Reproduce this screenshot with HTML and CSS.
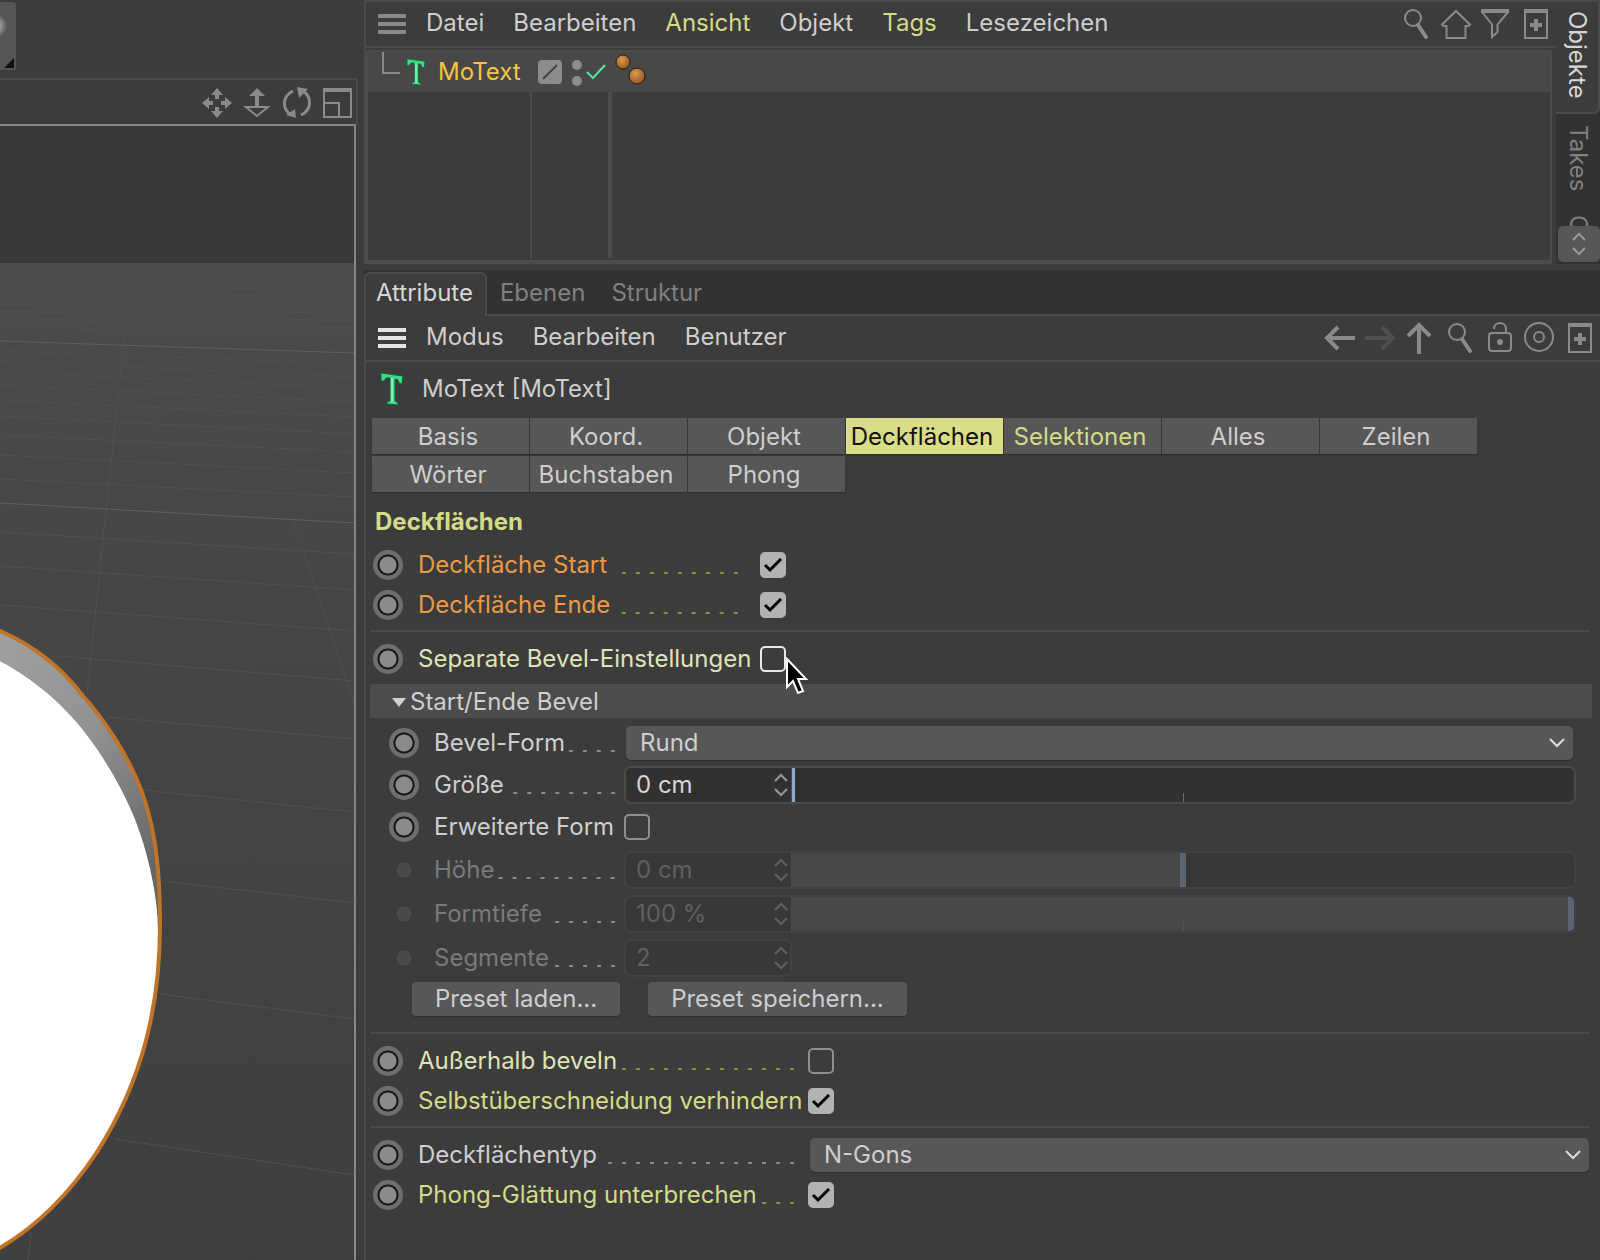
FILE: index.html
```html
<!DOCTYPE html>
<html lang="de">
<head>
<meta charset="utf-8">
<meta name="viewport" content="width=device-width, initial-scale=1">
<title>MoText – Attribute</title>
<link rel="stylesheet" href="styles.css">
</head>
<body>
<svg class="sprite" aria-hidden="true">
  <defs>
    <symbol id="i-search" viewBox="0 0 32 32"><circle cx="13" cy="10" r="8" fill="none" stroke="currentColor" stroke-width="2"/><path d="M18 17L26 29" stroke="currentColor" stroke-width="4" stroke-linecap="round"/></symbol>
    <symbol id="i-home" viewBox="0 0 32 32"><path d="M16 3L30 16.500L28.500 18H25.500V30H6.500V18H3.500L2 16.500Z" fill="none" stroke="currentColor" stroke-width="2"/></symbol>
    <symbol id="i-filter" viewBox="0 0 32 32"><path d="M1 1H29V5H1Z" fill="currentColor"/><path d="M2 4L12 16.500V29L17.500 24V16.500L28 4" fill="none" stroke="currentColor" stroke-width="2"/></symbol>
    <symbol id="i-plus" viewBox="0 0 32 32"><path d="M4 1H28V5H4Z" fill="currentColor"/><path d="M5 3V30H27V3" fill="none" stroke="currentColor" stroke-width="2"/><path d="M16 11V23M10 17H22" stroke="currentColor" stroke-width="4"/></symbol>
    <symbol id="i-left" viewBox="0 0 32 32"><path d="M31 16H4M14 5L3 16L14 27" fill="none" stroke="currentColor" stroke-width="4"/></symbol>
    <symbol id="i-right" viewBox="0 0 32 32"><path d="M1 16H28M18 5L29 16L18 27" fill="none" stroke="currentColor" stroke-width="4"/></symbol>
    <symbol id="i-up" viewBox="0 0 32 32"><path d="M15 32V4M4 14L15 3L26 14" fill="none" stroke="currentColor" stroke-width="4"/></symbol>
    <symbol id="i-lock" viewBox="0 0 32 32"><rect x="5" y="11" width="22" height="18" rx="3" fill="none" stroke="currentColor" stroke-width="2"/><path d="M10 7C10 -1 22 -1 22 7V11" fill="none" stroke="currentColor" stroke-width="2"/><circle cx="16" cy="20" r="3" fill="currentColor"/></symbol>
    <symbol id="i-target" viewBox="0 0 32 32"><circle cx="15" cy="15" r="14" fill="none" stroke="currentColor" stroke-width="2"/><circle cx="15" cy="15" r="5" fill="none" stroke="currentColor" stroke-width="2"/></symbol>
    <symbol id="i-menu" viewBox="0 0 28 20"><path d="M0 0H28V4H0ZM0 8H28V12H0ZM0 16H28V20H0Z" fill="currentColor"/></symbol>
    <symbol id="i-text" viewBox="0 0 24 34"><path d="M1 1L23 4L22 12L19 11L18 8L15 7V29L18 31V33L7 32V30L10 29V6L6 6L4 9L1 9Z" fill="#3fd98a" stroke="#185f3a" stroke-width="1"/><path d="M12 6V30" stroke="#7df5b4" stroke-width="2"/></symbol>
    <symbol id="i-spin" viewBox="0 0 14 24"><path d="M1 8L7 2L13 8M1 16L7 22L13 16" fill="none" stroke="currentColor" stroke-width="2"/></symbol>
  </defs>
</svg>

<div class="app">
  <section class="stage" aria-label="Ansicht">
    <div class="palette">
      <svg class="swatch" width="16" height="68" viewBox="0 0 16 68" aria-hidden="true">
        <defs><radialGradient id="glow" cx="-6" cy="24" r="13" gradientUnits="userSpaceOnUse"><stop offset="0" stop-color="#d8d8d8"/><stop offset="1" stop-color="#565656"/></radialGradient></defs>
        <path d="M0 0H13Q16 0 16 3V65Q16 68 13 68H0Z" fill="#565656"/>
        <circle cx="-6" cy="24" r="13" fill="url(#glow)"/>
        <path d="M14 56V66H4Z" fill="#111"/>
      </svg>
    </div>
    <div class="stage-bar">
      <button class="icon" aria-label="Verschieben"><svg viewBox="0 0 32 32"><path d="M16 1L22 8H18V12H14V8H10ZM16 31L10 24H14V20H18V24H22ZM1 16L8 10V14H12V18H8V22ZM31 16L24 22V18H20V14H24V10Z" fill="currentColor"/></svg></button>
      <button class="icon" aria-label="Zoomen"><svg viewBox="0 0 32 32"><path d="M16 1L24 9H18V19H14V9H8Z" fill="currentColor"/><path d="M5 20H27L16 29Z" fill="none" stroke="currentColor" stroke-width="2"/></svg></button>
      <button class="icon" aria-label="Drehen"><svg viewBox="0 0 32 32"><path d="M12 4C1 9 1 22 10 28M20 28C31 23 31 10 22 4" fill="none" stroke="currentColor" stroke-width="3"/><path d="M16 0L27 2L18 11ZM5 28L14 22L15 31Z" fill="currentColor"/></svg></button>
      <button class="icon" aria-label="Ansicht maximieren"><svg viewBox="0 0 32 32"><path d="M3 3H30V30H3ZM3 16H18V30" fill="none" stroke="currentColor" stroke-width="2"/><path d="M2 1H31V5H2Z" fill="currentColor"/></svg></button>
    </div>
    <svg class="scene" viewBox="0 126 354 1134" preserveAspectRatio="xMinYMin slice" aria-hidden="true">
      <defs>
        <linearGradient id="floor" x1="0" y1="0" x2="0" y2="1"><stop offset="0" stop-color="#4c4c4c"/><stop offset=".3" stop-color="#464646"/><stop offset="1" stop-color="#3f3f3f"/></linearGradient>
        <linearGradient id="side" x1="0" y1="0" x2=".6" y2="1"><stop offset="0" stop-color="#a0a0a0"/><stop offset=".5" stop-color="#929292"/><stop offset="1" stop-color="#666"/></linearGradient>
      </defs>
      <rect y="126" width="354" height="137" fill="#393939"/>
      <rect y="263" width="354" height="997" fill="url(#floor)"/>
      <g fill="none" stroke="#505050">
        <path d="M0 276L354 283M0 283L354 291M0 290L354 298M0 297L354 306M0 304L354 314M0 311L354 321M0 318L354 328M0 326L354 336"/>
        <path d="M0 351L354 364M0 361L354 377M0 372L354 388M0 385L354 402M0 400L354 417M0 416L354 434M0 435L354 452M0 455L354 473M0 479L354 497"/>
        <path d="M0 532L354 554M0 566L354 590M0 605L354 631M58 656L354 681M106 717L354 739M143 790L354 812M161 881L354 903M160 994L354 1019M115 1139L354 1175"/>
        <path d="M127 311L87 694M293 523L354 703M31 1232L28 1260"/>
        <path d="M240 359L293 523" stroke="#4b4b4b"/>
        <path d="M0 341L354 353M0 503L354 523" stroke="#606060"/>
      </g>
      <path d="M0 630C33 645 62 668 83 696C103 718 126 752 140 787C152 818 161 855 161 925L158 930C158 900 150 862 140 833C126 790 95 742 72 717C52 695 28 676 0 661Z" fill="url(#side)"/>
      <path d="M0 661C28 676 52 695 72 717C95 742 126 790 140 833C150 862 158 900 158 930L160 950C158 1010 143 1080 97 1152C72 1190 38 1226 0 1248Z" fill="#fff"/>
      <path d="M-2 630C33 645 62 668 83 696C103 718 126 752 140 787C152 818 160 855 160 925C160 1005 143 1080 97 1152C72 1190 38 1226 -2 1249" fill="none" stroke="#c07428" stroke-width="4"/>
    </svg>
  </section>

  <main class="panels">
    <section class="objects">
      <div class="objects-main">
        <nav class="menu">
          <button class="burger" aria-label="Menü"><svg><use href="#i-menu"/></svg></button>
          <button>Datei</button><button>Bearbeiten</button><button class="lime">Ansicht</button><button>Objekt</button><button class="lime">Tags</button><button>Lesezeichen</button>
          <div class="tools">
            <button class="icon" aria-label="Suchen"><svg><use href="#i-search"/></svg></button>
            <button class="icon" aria-label="Start"><svg><use href="#i-home"/></svg></button>
            <button class="icon" aria-label="Filter"><svg><use href="#i-filter"/></svg></button>
            <button class="icon" aria-label="Neu"><svg><use href="#i-plus"/></svg></button>
          </div>
        </nav>
        <div class="tree">
          <div class="tree-row">
            <div class="tree-name">
              <svg class="branch" width="18" height="24" viewBox="0 0 18 24"><path d="M1 0V21H18" fill="none" stroke="#8a8a8a" stroke-width="2"/></svg>
              <svg class="type-small"><use href="#i-text"/></svg>
              <span>MoText</span>
            </div>
            <div class="tree-flags">
              <svg width="70" height="30" viewBox="0 0 70 30"><rect x="0" y="3" width="24" height="24" rx="4" fill="#8c8c8c"/><path d="M5 22L19 8" stroke="#444" stroke-width="2"/><circle cx="39" cy="8" r="5" fill="#8c8c8c"/><circle cx="39" cy="24" r="5" fill="#8c8c8c"/><path d="M49 15L55 21L67 8" fill="none" stroke="#55e59a" stroke-width="2"/></svg>
            </div>
            <div class="tree-tags">
              <svg width="32" height="34" viewBox="0 0 32 34"><defs><radialGradient id="ball" cx=".4" cy=".35" r=".7"><stop offset="0" stop-color="#e09a4c"/><stop offset="1" stop-color="#8f5420"/></radialGradient></defs><circle cx="9" cy="9" r="7" fill="url(#ball)" stroke="#2a1c10"/><circle cx="23" cy="23" r="8" fill="url(#ball)" stroke="#2a1c10"/></svg>
            </div>
          </div>
          <div class="tree-body"><div></div><div></div><div></div></div>
        </div>
      </div>
      <div class="side-tabs">
        <button class="active">Objekte</button>
        <button>Takes</button>
        <button class="cut">C</button>
        <button class="scroller" aria-label="Weitere Tabs"><svg width="14" height="24"><use href="#i-spin"/></svg></button>
      </div>
    </section>

    <section class="attributes">
      <div class="tabs">
        <button class="active">Attribute</button><button>Ebenen</button><button>Struktur</button>
      </div>
      <nav class="menu">
        <button class="burger bright" aria-label="Menü"><svg><use href="#i-menu"/></svg></button>
        <button>Modus</button><button>Bearbeiten</button><button>Benutzer</button>
        <div class="tools">
          <button class="icon" aria-label="Zurück"><svg><use href="#i-left"/></svg></button>
          <button class="icon" aria-label="Vor" disabled><svg><use href="#i-right"/></svg></button>
          <button class="icon" aria-label="Hoch"><svg><use href="#i-up"/></svg></button>
          <button class="icon" aria-label="Suchen"><svg><use href="#i-search"/></svg></button>
          <button class="icon" aria-label="Sperren"><svg><use href="#i-lock"/></svg></button>
          <button class="icon" aria-label="Fokus"><svg><use href="#i-target"/></svg></button>
          <button class="icon" aria-label="Neu"><svg><use href="#i-plus"/></svg></button>
        </div>
      </nav>
      <header class="object-title"><svg class="type-large"><use href="#i-text"/></svg><span>MoText [MoText]</span></header>
      <div class="pages">
        <button>Basis</button><button>Koord.</button><button>Objekt</button><button class="active">Deckflächen</button><button class="lime">Selektionen</button><button>Alles</button><button>Zeilen</button><button>Wörter</button><button>Buchstaben</button><button>Phong</button>
      </div>

      <form class="params">
        <h2>Deckflächen</h2>
        <div class="group caps">
          <div class="row orange"><i class="key"></i><label for="start">Deckfläche Start</label><span class="dots"></span><input type="checkbox" id="start" checked></div>
          <div class="row orange"><i class="key"></i><label for="ende">Deckfläche Ende</label><span class="dots"></span><input type="checkbox" id="ende" checked></div>
        </div>
        <div class="group caps">
          <div class="row pale"><i class="key"></i><label for="separat">Separate Bevel-Einstellungen</label><span class="dots none"></span>
            <span class="hover"><input type="checkbox" id="separat"><svg class="cursor" width="24" height="38" viewBox="0 0 24 38" aria-hidden="true"><path d="M2 2V30L8 24L13 36L18 34L13 22H21Z" fill="#000" stroke="#fff" stroke-width="2"/></svg></span></div>
        </div>
        <button type="button" class="fold"><svg width="14" height="9" viewBox="0 0 14 9"><path d="M0 0H14L7 9Z" fill="#d0d0d0"/></svg>Start/Ende Bevel</button>
        <div class="bevel">
          <div class="row"><i class="key"></i><label for="form">Bevel-Form</label><span class="dots"></span><select id="form"><option>Rund</option></select></div>
          <div class="row"><i class="key"></i><label for="groesse">Größe</label><span class="dots"></span>
            <div class="field"><input type="text" id="groesse" value="0 cm"><svg width="14" height="24"><use href="#i-spin"/></svg><input type="range" class="at-start" value="0" aria-label="Größe"></div></div>
          <div class="row"><i class="key"></i><label for="erweitert">Erweiterte Form</label><span class="dots none"></span><input type="checkbox" id="erweitert"></div>
          <div class="row tall off"><i class="key"></i><label for="hoehe">Höhe</label><span class="dots"></span>
            <div class="field"><input type="text" id="hoehe" value="0 cm" disabled><svg width="14" height="24"><use href="#i-spin"/></svg><input type="range" class="at-middle" value="50" aria-label="Höhe" disabled></div></div>
          <div class="row tall off"><i class="key"></i><label for="tiefe">Formtiefe</label><span class="dots"></span>
            <div class="field"><input type="text" id="tiefe" value="100 %" disabled><svg width="14" height="24"><use href="#i-spin"/></svg><input type="range" class="at-end" value="100" aria-label="Formtiefe" disabled></div></div>
          <div class="row tall off"><i class="key"></i><label for="segmente">Segmente</label><span class="dots"></span>
            <div class="field short"><input type="text" id="segmente" value="2" disabled><svg width="14" height="24"><use href="#i-spin"/></svg></div></div>
          <div class="presets"><button type="button">Preset laden...</button><button type="button">Preset speichern...</button></div>
        </div>
        <div class="group wide">
          <div class="row pale"><i class="key"></i><label for="aussen">Außerhalb beveln</label><span class="dots"></span><input type="checkbox" id="aussen"></div>
          <div class="row lime"><i class="key"></i><label for="selbst">Selbstüberschneidung verhindern</label><span class="dots none"></span><input type="checkbox" id="selbst" checked></div>
        </div>
        <div class="group wide">
          <div class="row"><i class="key"></i><label for="typ">Deckflächentyp</label><span class="dots"></span><select id="typ"><option>N-Gons</option></select></div>
          <div class="row lime"><i class="key"></i><label for="phong">Phong-Glättung unterbrechen</label><span class="dots"></span><input type="checkbox" id="phong" checked></div>
        </div>
      </form>
    </section>
  </main>
</div>
</body>
</html>
```
FILE: styles.css
```css
:root {
  --bg: #3c3c3c;
  --dark: #323232;
  --line: #4b4b4b;
  --button: #575757;
  --text: #cecece;
  --muted: #808080;
  --icon: #8a8a8a;
  --lime: #d3db87;
  --pale: #dfe4b8;
  --orange: #eb9a45;
}

* { box-sizing: border-box; }

body {
  margin: 0;
  background: var(--bg);
  color: var(--text);
  font: 24px/28px Inter, "Liberation Sans", sans-serif;
}

button, input, select {
  margin: 0;
  padding: 0;
  border: 0;
  background: none;
  color: inherit;
  font: inherit;
}

svg { display: block; flex: none; }
.sprite { position: absolute; width: 0; height: 0; }

.app { display: grid; grid-template-columns: 358px minmax(0, 1fr); column-gap: 6px; min-height: 100vh; }

/* 3D view */
.stage { display: flex; flex-direction: column; min-height: 0; }
.palette { height: 78px; padding-top: 2px; }
.stage-bar { display: flex; justify-content: flex-end; align-items: center; gap: 8px; height: 46px; padding: 1px 3px 0 0; border: solid var(--line); border-width: 2px 2px 0 0; }
.scene { flex: 1 0 0; width: 356px; min-height: 0; border: solid #858585; border-width: 2px 2px 0 0; }
.icon { width: 32px; height: 32px; color: var(--icon); }
.icon svg { width: 32px; height: 32px; }
.icon:disabled { color: #505050; }

.panels { display: flex; flex-direction: column; }

/* Object manager */
.objects { display: flex; height: 264px; margin-bottom: 6px; }
.objects-main { display: flex; flex: 1; flex-direction: column; border: solid var(--line); border-width: 2px 0 0 2px; }
.menu { display: flex; align-items: center; gap: 29px; height: 46px; padding: 0 4px 0 12px; border-bottom: 2px solid var(--line); }
.menu > button { padding-bottom: 2px; }
.menu > .burger { width: 28px; height: 20px; margin-right: -9px; padding: 0; color: var(--icon); }
.burger svg { width: 28px; height: 20px; }
.menu > .bright { color: #e6e6e6; }
.tools { display: flex; gap: 8px; margin-left: auto; }
.menu > .lime, .lime { color: var(--lime); }

.tree { display: flex; flex: 1; flex-direction: column; margin: 2px 4px 0 0; border: solid var(--line); border-width: 2px 2px 4px 2px; }
.tree-row { display: grid; grid-template-columns: 162px 80px 1fr; height: 40px; background: #484848; }
.tree-name { display: flex; align-items: center; padding-left: 14px; color: #f5c542; }
.branch { align-self: flex-start; }
.type-small { width: 20px; height: 28px; margin: 0 12px 0 6px; }
.tree-flags { display: flex; align-items: center; padding-left: 8px; }
.tree-tags { padding: 1px 0 0 4px; }
.tree-body { display: grid; flex: 1; grid-template-columns: 164px 80px 1fr; padding-bottom: 2px; }
.tree-body div:nth-child(1) { border-right: 2px solid var(--line); }
.tree-body div:nth-child(2) { border-right: 4px solid var(--line); }

.side-tabs { display: flex; flex-direction: column; width: 44px; background: var(--dark); }
.side-tabs button { width: 44px; color: var(--muted); text-align: left; writing-mode: vertical-rl; line-height: 44px; padding-top: 11px; height: 90px; }
.side-tabs .active { height: 114px; border: solid var(--line); border-width: 2px 2px 2px 0; background: var(--bg); color: #d6d6d6; line-height: 42px; padding-top: 9px; border-radius: 0 0 6px 0; }
.side-tabs .cut { height: 22px; }
.side-tabs .scroller { display: flex; align-items: center; justify-content: center; width: 42px; height: 36px; margin-left: 2px; padding: 0; border-radius: 5px; background: var(--button); color: #999; }

/* Attribute manager */
.attributes { flex: 1; border-left: 2px solid var(--line); }
.tabs { display: flex; height: 46px; background: var(--dark); margin-left: -2px; padding-top: 2px; box-shadow: inset 0 -2px var(--line); }
.tabs button { padding: 0 13px 3px; color: var(--muted); }
.tabs .active { padding: 0 12px 4px 10px; border: solid var(--line); border-width: 2px 2px 0 2px; border-radius: 6px 6px 0 0; background: var(--bg); color: #d6d6d6; }
.object-title { display: flex; align-items: center; gap: 18px; height: 56px; padding: 0 0 2px 14px; }
.type-large { width: 24px; height: 34px; }
.pages { display: grid; grid-template-columns: repeat(auto-fill, 157px); gap: 2px 1px; padding-left: 6px; }
.pages button { height: 36px; padding: 1px 5px 0 0; background: var(--button); box-shadow: 0 1px 1px #2e2e2e; white-space: nowrap; }
.pages .active { background: #d9dd85; color: #111; }

.params { padding: 16px 8px 20px 4px; }
h2 { margin: 0 0 9px 5px; color: var(--lime); font-size: 24px; font-weight: 700; line-height: 28px; }
.group { padding-bottom: 5px; }
.group + .group, .bevel + .group { border-top: 2px solid var(--line); padding-top: 7px; margin-right: 2px; }
.row { display: grid; grid-template-columns: 32px auto minmax(0, 1fr) auto; align-items: center; height: 40px; padding-left: 3px; }
.row label { padding-left: 13px; white-space: nowrap; }
.caps .row { grid-template-columns: 32px auto minmax(0, 1fr) 26px; width: 416px; }
.row.orange { --dot: #8c8f40; }
.row.orange label { color: var(--orange); }
.row.pale, .row.lime { --dot: #8c8f40; }
.pale label { color: var(--pale); }

.key { width: 30px; height: 30px; border-radius: 50%; background: radial-gradient(circle, #8a8a8a 8px, #151515 9px, #151515 10px, #6e6e6e 11px); }
.off .key { width: 18px; height: 18px; margin-left: 6px; border: 1px solid #363636; background: #494949; }
.off { color: #7a7a7a; }

.dots { height: 2px; margin: 16px 22px 0 6px; background: linear-gradient(to left, var(--dot, #8a8a8a) 4px, transparent 4px) right / 14px 2px repeat-x; }
.dots.none { background: none; margin: 0; }

input[type="checkbox"] { appearance: none; width: 26px; height: 26px; border: 2px solid #8e8e8e; border-radius: 5px; }
input[type="checkbox"]:checked { border: 0; background: #b2b2b2 url("data:image/svg+xml,%3Csvg xmlns='http://www.w3.org/2000/svg' viewBox='0 0 26 26'%3E%3Cpath d='M5 13L10 18L21 7' fill='none' stroke='%23000' stroke-width='3'/%3E%3C/svg%3E"); }
.hover { position: relative; height: 26px; }
.hover input { display: block; }
.hover input[type="checkbox"] { border-color: #e8e8e8; }
.cursor { position: absolute; left: 25px; top: 11px; }

.fold { display: flex; align-items: center; gap: 4px; width: 100%; height: 34px; padding: 2px 0 0 22px; background: #4c4c4c; }

select { appearance: none; width: 100%; height: 34px; padding-left: 14px; border-radius: 5px; background: var(--button) url("data:image/svg+xml,%3Csvg xmlns='http://www.w3.org/2000/svg' width='18' height='12'%3E%3Cpath d='M2 2L9 9L16 2' fill='none' stroke='%23ddd' stroke-width='2'/%3E%3C/svg%3E") right 7px center no-repeat; box-shadow: 0 1px 1px #2e2e2e; }

.bevel { padding: 4px 16px 16px; }
.bevel .row { height: 42px; padding-left: 3px; grid-template-columns: 32px auto minmax(0, 1fr) calc(100% - 235px); }
.bevel .tall { height: 44px; }
.bevel .dots { margin-left: 4px; margin-right: 9px; }
.bevel .dots.none { margin: 0; }
.bevel select { margin-left: 2px; width: calc(100% - 5px); }
.field { display: flex; align-items: center; height: 38px; border: 2px solid var(--line); border-radius: 7px; background: #313131; color: #d6d6d6; overflow: hidden; }
.field input[type="text"] { width: 148px; padding-left: 10px; }
.field > svg { margin-right: 3px; color: #989898; }
.field.short { width: 168px; }
.off .field { border-color: #414141; background: #383838; color: #606060; }
.off .field > svg { color: #606060; }

input[type="range"] { appearance: none; flex: 1; align-self: stretch; min-width: 0; border-left: 1px solid var(--line); }
input[type="range"]::-webkit-slider-thumb { appearance: none; width: 6px; height: 34px; background: #5a6672; }
input[type="range"]:enabled::-webkit-slider-thumb { width: 3px; background: #8fa9cf; }
.at-start { background: linear-gradient(#6a6a6a, #6a6a6a) 50% 100% / 1px 9px no-repeat; }
.at-middle { background: linear-gradient(to right, #484848 50%, transparent 50%); }
.at-end { background: linear-gradient(#555, #555) 50% 100% / 1px 9px no-repeat #484848; }

.presets { display: flex; gap: 28px; padding: 2px 0 0 26px; }
.presets button { height: 34px; padding: 0 23px; border-radius: 4px; background: var(--button); box-shadow: 0 1px 1px #2e2e2e; }

.wide .row { grid-template-columns: 32px auto minmax(0, 1fr) calc(100% - 435px); }
.wide .dots { margin-left: 4px; margin-right: 14px; }
.wide .dots.none { margin: 0; }
.wide select { margin-left: 2px; width: calc(100% - 3px); }
```
